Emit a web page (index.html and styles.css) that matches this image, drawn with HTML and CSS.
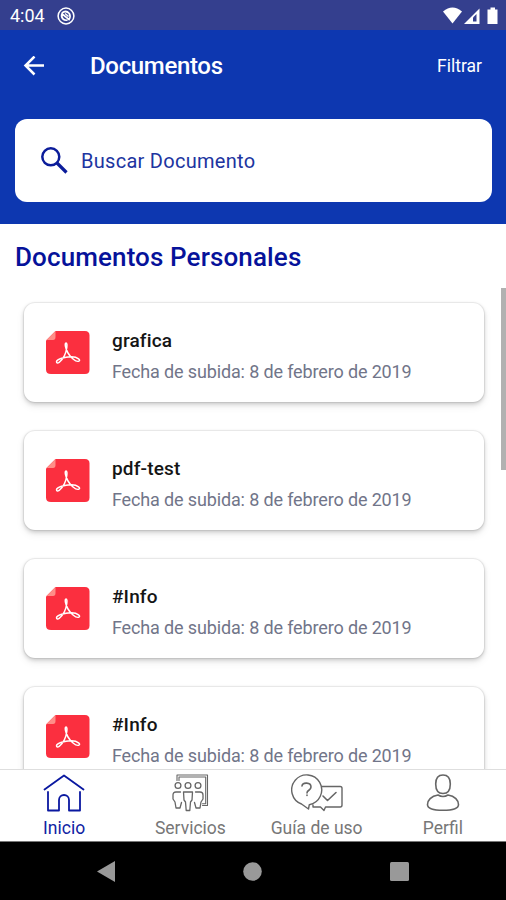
FILE: index.html
```html
<!DOCTYPE html>
<html lang="es">
<head>
<meta charset="utf-8">
<title>Documentos</title>
<link rel="stylesheet" href="styles.css">
</head>
<body>
<svg class="defs" width="0" height="0">
  <symbol id="pdf" viewBox="0 0 44 44">
    <path d="M9.500 1H39Q43.500 1 43.500 5.500V39.500Q43.500 44 39 44H5Q0 44 0 39.500V10.500Z" fill="#fb2f3f"/>
    <path d="M9.500 1V7Q9.500 10 7 10H.5Z" fill="#ff8e88"/>
    <path d="M20 13C18.500 13 19.400 18.500 22 23C24.500 27.300 29.500 32 32.500 31.300C35.500 30.500 32 27 25.500 26.800C19 26.500 10.500 29.500 10.500 31.800C10.500 34.500 15 32.500 18.500 25.500C20.500 21.500 22 13 20 13Z" fill="none" stroke="#fff" stroke-width="1.500"/>
  </symbol>
</svg>
<div class="phone">
  <div class="status">
    <span class="clock">4:04</span>
    <svg class="badge" viewBox="0 0 18 18" width="18" height="18" fill="none" stroke="#fff">
      <circle cx="9" cy="9" r="7.900" stroke-width="1.500"/>
      <path d="M5 6Q9 2.800 12.300 6.500Q14 9.500 12 12.500L5 6.800Q3.800 9.500 6 12Q8 13.800 10.500 13" stroke-width="1.700"/>
      <path d="M8 6.500L11.500 9.500" stroke-width="1.500"/>
    </svg>
    <svg class="signals" viewBox="0 0 56 18" width="56" height="18" fill="#fff">
      <path d="M0 4.500Q9.500-3.500 19 4.500L9.500 16.500Z"/>
      <path d="M21 17L36.500 1.500V17Z"/>
      <path d="M30 10.500L33.500 7V14.500H30Z" fill="#343f8e"/>
      <path d="M47.500 0.500H52V2.500H54.500V17H44.500V2.500H47.500Z"/>
    </svg>
  </div>
  <header class="header">
    <div class="bar">
      <svg class="back" viewBox="0 0 22 20" width="22" height="20" fill="none" stroke="#fff" stroke-width="2.500"><path d="M21 9.500H2.500M11.500 0.500L2.500 9.500L11.500 18.500"/></svg>
      <h1 class="title">Documentos</h1>
      <span class="filter">Filtrar</span>
    </div>
    <div class="search">
      <svg viewBox="0 0 27 27" width="27" height="27" fill="none" stroke="#0b1c9a"><circle cx="9.800" cy="9.800" r="8.500" stroke-width="2.500"/><path d="M16 16L25.500 25.500" stroke-width="3.200"/></svg>
      <span class="placeholder">Buscar Documento</span>
    </div>
  </header>
  <main class="content">
    <h2 class="heading">Documentos Personales</h2>
    <div class="list">
      <article class="card"><svg class="pdf"><use href="#pdf"/></svg><div><div class="name">grafica</div><div class="date">Fecha de subida: 8 de febrero de 2019</div></div></article>
      <article class="card"><svg class="pdf"><use href="#pdf"/></svg><div><div class="name">pdf-test</div><div class="date">Fecha de subida: 8 de febrero de 2019</div></div></article>
      <article class="card"><svg class="pdf"><use href="#pdf"/></svg><div><div class="name">#Info</div><div class="date">Fecha de subida: 8 de febrero de 2019</div></div></article>
      <article class="card"><svg class="pdf"><use href="#pdf"/></svg><div><div class="name">#Info</div><div class="date">Fecha de subida: 8 de febrero de 2019</div></div></article>
    </div>
    <div class="scrollbar"></div>
  </main>
  <nav class="tabs">
    <div class="tab active">
      <svg viewBox="0 0 42 38" width="42" height="38" stroke-width="1.800"><path d="M1.500 15.500L21 1.500L40.500 15.500M5 18V36.500H16V26A5 5 0 0 1 26 26V36.500H37V18"/></svg>
      <span>Inicio</span>
    </div>
    <div class="tab">
      <svg viewBox="0 0 38 38" width="38" height="38" stroke-width="1.300">
        <path d="M6 6.500V1H36.500V31.500H31.500M8 6.500V3H34.700V29.700H31.500" stroke-width="1.100"/>
        <circle cx="7" cy="11.500" r="2.900"/><circle cx="17" cy="11.500" r="2.900"/><circle cx="27" cy="11.500" r="2.900"/>
        <path d="M9.500 18H5Q2 18 2 21V25L4 28L5 34H9L10.500 28.500M12.500 18H21.500L21 26L19.500 28L18.800 36.500H15.200L14.500 28L13 26ZM24.500 18H29Q32 18 32 21V25L30 28L29 34H25L23.500 28.500"/>
      </svg>
      <span>Servicios</span>
    </div>
    <div class="tab">
      <svg viewBox="0 0 52 38" width="52" height="38" stroke-width="1.400">
        <path d="M17.500 35L10.500 30A15 15 0 1 1 18.300 30.700ZM30.500 12.500H49.200Q51 12.500 51 14.300V31Q51 33 49.200 33H34.500L33 36.500L29.500 33H22V31"/>
        <path d="M11 12C11.500 8 20 8 20 13C20 16.500 16 16 16 19M16 21V21.500M32 22L36.500 26.500L45 18.500" stroke-width="1.600"/>
      </svg>
      <span>Guía de uso</span>
    </div>
    <div class="tab">
      <svg viewBox="0 0 34 38" width="34" height="38" stroke-width="1.600"><path d="M17 1C21.500 1 24.300 4 24.300 10C24.300 16 21.500 19.500 17 19.500S9.700 16 9.700 10C9.700 4 12.500 1 17 1ZM12 21C5 22 1.500 26.500 1.500 30.500C1.500 34.500 7 36.300 17 36.300S32.500 34.500 32.500 30.500C32.500 26.500 29 22 22 21Q17 24 12 21Z"/></svg>
      <span>Perfil</span>
    </div>
  </nav>
  <div class="system">
    <svg viewBox="0 0 18 21" width="18" height="21"><path d="M0 10.500L18 0V21Z"/></svg>
    <svg viewBox="0 0 19 19" width="19" height="19"><circle cx="9.500" cy="9.500" r="9.300"/></svg>
    <svg viewBox="0 0 19 19" width="19" height="19"><rect width="19" height="19" rx="1.500"/></svg>
  </div>
</div>
</body>
</html>
```
FILE: styles.css
```css
* { box-sizing: border-box; }
body { margin: 0; font-family: Roboto, sans-serif; background: #fff; }
svg { display: block; flex: none; }
.defs { position: absolute; }
.phone { width: 506px; height: 900px; display: flex; flex-direction: column; overflow: hidden; white-space: nowrap; }
.status { height: 30px; flex: none; background: #343f8e; display: flex; align-items: center; padding: 1px 8px 0 10px; color: #fff; }
.clock { font-size: 18px; width: 47px; }
.signals { margin-left: auto; margin-right: -1px; }
.header { height: 194px; flex: none; background: #0d37b0; padding: 0 14px 22px 15px; }
.bar { height: 89px; display: flex; align-items: center; padding: 0 10px 17px 8px; color: #fff; }
.title { margin: 0 auto 0 45px; font-size: 24px; font-weight: 500; letter-spacing: -0.33px; }
.filter { font-size: 17.500px; }
.search { height: 83px; background: #fff; border-radius: 12px; display: flex; align-items: center; gap: 13px; padding-left: 26px; }
.placeholder { font-size: 20px; letter-spacing: 0.28px; color: #2034a0; }
.content { height: 545px; flex: none; overflow: hidden; position: relative; padding: 18px 22px 0 24px; }
.heading { margin: 0 0 0 -9px; height: 31px; line-height: 31px; font-size: 26px; font-weight: 500; letter-spacing: 0.12px; color: #06129a; }
.list { display: flex; flex-direction: column; gap: 29px; padding-top: 30px; }
.card { height: 99px; flex: none; border-radius: 11px; background: #fff; display: flex; gap: 22px; padding: 26px 22px; box-shadow: 0 0 1px 1px rgba(0,0,0,.07), 0 2px 4px rgba(0,0,0,.17), 0 4px 9px rgba(0,0,0,.08); }
.pdf { width: 44px; height: 44px; margin-top: 1px; }
.name { height: 23px; line-height: 23px; font-size: 19px; font-weight: 500; letter-spacing: 0.15px; color: #151515; }
.date { margin-top: 9px; line-height: 22px; font-size: 18px; letter-spacing: -0.14px; color: #717589; }
.scrollbar { position: absolute; right: 0; top: 64px; width: 5px; height: 182px; background: #b1b1b1; }
.tabs { height: 73px; flex: none; background: #fff; border-top: 1px solid #dedede; border-bottom: 1px solid #777; display: grid; grid-template-columns: repeat(4, 1fr); padding-left: 1px; color: #777; }
.tab { display: flex; flex-direction: column; align-items: center; padding-top: 4px; font-size: 17.500px; line-height: 22px; gap: 5px; }
.tab svg { fill: none; stroke: #666; stroke-linejoin: round; stroke-linecap: round; }
.tab.active { color: #1023a3; }
.tab.active svg { stroke: #0a18a0; }
.system { flex: 1; background: #000; display: flex; justify-content: space-between; align-items: center; padding: 0 97px; }
.system svg { fill: #999; }
```
